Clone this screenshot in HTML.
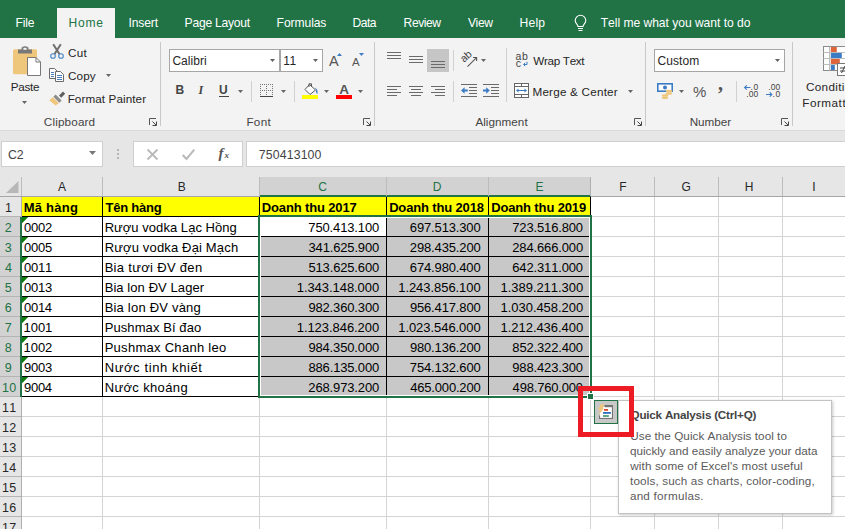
<!DOCTYPE html><html><head><meta charset="utf-8"><title>Excel</title><style>
*{box-sizing:border-box;margin:0;padding:0}
html,body{width:845px;height:529px;overflow:hidden;background:#fff}
body{position:relative;font-family:"Liberation Sans",sans-serif;font-size:12px;color:#262626;font-kerning:none}
.a{position:absolute;white-space:nowrap}
svg{overflow:visible}
</style></head><body>
<div class="a" style="left:0px;top:0px;width:845px;height:38px;background:#217346;"></div>
<div class="a" style="left:57px;top:8px;width:58px;height:30px;background:#f3f3f3;"></div>
<div class="a" style="left:15.41px;top:15.00px;font-size:12.1px;line-height:16px;letter-spacing:-0.122px;color:#fff;">File</div>
<div class="a" style="left:68.61px;top:15.00px;font-size:12.1px;line-height:16px;letter-spacing:0.685px;color:#217346;">Home</div>
<div class="a" style="left:128.48px;top:15.00px;font-size:12.1px;line-height:16px;letter-spacing:-0.131px;color:#fff;">Insert</div>
<div class="a" style="left:184.61px;top:15.00px;font-size:12.1px;line-height:16px;letter-spacing:-0.247px;color:#fff;">Page Layout</div>
<div class="a" style="left:276.61px;top:15.00px;font-size:12.1px;line-height:16px;letter-spacing:-0.085px;color:#fff;">Formulas</div>
<div class="a" style="left:352.61px;top:15.00px;font-size:12.1px;line-height:16px;letter-spacing:-0.522px;color:#fff;">Data</div>
<div class="a" style="left:403.61px;top:15.00px;font-size:12.1px;line-height:16px;letter-spacing:-0.462px;color:#fff;">Review</div>
<div class="a" style="left:467.95px;top:15.00px;font-size:12.1px;line-height:16px;letter-spacing:-0.401px;color:#fff;">View</div>
<div class="a" style="left:519.61px;top:15.00px;font-size:12.1px;line-height:16px;letter-spacing:0.205px;color:#fff;">Help</div>
<div class="a" style="left:600.73px;top:15.00px;font-size:12.1px;line-height:16px;letter-spacing:-0.034px;color:#fff;">Tell me what you want to do</div>
<svg class="a" style="left:574px;top:15px" width="13" height="17" viewBox="0 0 13 17"><path d="M4 11.5C4 9.5 1.2 8.6 1.2 5.6A5.3 5.3 0 0 1 11.8 5.6C11.8 8.6 9 9.5 9 11.5Z" fill="none" stroke="#fff" stroke-width="1.1"/><path d="M4 13.5H9M4.5 15.5H8.5" stroke="#fff" stroke-width="1.1"/></svg>
<div class="a" style="left:0px;top:38px;width:845px;height:92px;background:#f3f3f3;"></div>
<div class="a" style="left:0px;top:130px;width:845px;height:1px;background:#d8d8d8;"></div>
<div class="a" style="left:0px;top:131px;width:845px;height:46px;background:#e6e6e6;"></div>
<div class="a" style="left:160px;top:42px;width:1px;height:84px;background:#c8c8c8;"></div>
<div class="a" style="left:374px;top:42px;width:1px;height:84px;background:#c8c8c8;"></div>
<div class="a" style="left:645px;top:42px;width:1px;height:84px;background:#c8c8c8;"></div>
<div class="a" style="left:792px;top:42px;width:1px;height:84px;background:#c8c8c8;"></div>
<div class="a" style="left:43.81px;top:114.00px;font-size:11.7px;line-height:15px;letter-spacing:0.159px;color:#444;">Clipboard</div>
<div class="a" style="left:246.44px;top:114.00px;font-size:11.7px;line-height:15px;letter-spacing:0.278px;color:#444;">Font</div>
<div class="a" style="left:475.38px;top:114.00px;font-size:11.7px;line-height:15px;letter-spacing:0.035px;color:#444;">Alignment</div>
<div class="a" style="left:689.64px;top:114.00px;font-size:11.7px;line-height:15px;letter-spacing:-0.012px;color:#444;">Number</div>
<svg class="a" style="left:149px;top:118px" width="8" height="8" viewBox="0 0 8 8"><path d="M0.5 7V0.5H7" fill="none" stroke="#555" stroke-width="1"/><path d="M3.5 3.5L7 7M7.5 3.5V7.5H3.5" fill="none" stroke="#444" stroke-width="1"/></svg>
<svg class="a" style="left:363px;top:118px" width="8" height="8" viewBox="0 0 8 8"><path d="M0.5 7V0.5H7" fill="none" stroke="#555" stroke-width="1"/><path d="M3.5 3.5L7 7M7.5 3.5V7.5H3.5" fill="none" stroke="#444" stroke-width="1"/></svg>
<svg class="a" style="left:634px;top:118px" width="8" height="8" viewBox="0 0 8 8"><path d="M0.5 7V0.5H7" fill="none" stroke="#555" stroke-width="1"/><path d="M3.5 3.5L7 7M7.5 3.5V7.5H3.5" fill="none" stroke="#444" stroke-width="1"/></svg>
<svg class="a" style="left:781px;top:118px" width="8" height="8" viewBox="0 0 8 8"><path d="M0.5 7V0.5H7" fill="none" stroke="#555" stroke-width="1"/><path d="M3.5 3.5L7 7M7.5 3.5V7.5H3.5" fill="none" stroke="#444" stroke-width="1"/></svg>
<div class="a" style="left:10.64px;top:79.00px;font-size:11.7px;line-height:15px;letter-spacing:-0.260px;color:#262626;">Paste</div>
<div class="a" style="left:68.01px;top:45.00px;font-size:11.7px;line-height:15px;letter-spacing:0.236px;color:#262626;">Cut</div>
<div class="a" style="left:68.01px;top:68.00px;font-size:11.7px;line-height:15px;letter-spacing:0.101px;color:#262626;">Copy</div>
<div class="a" style="left:67.64px;top:91.00px;font-size:11.7px;line-height:15px;letter-spacing:0.091px;color:#262626;">Format Painter</div>
<div class="a" style="left:533.35px;top:53.00px;font-size:11.7px;line-height:15px;letter-spacing:-0.328px;color:#262626;">Wrap Text</div>
<div class="a" style="left:532.44px;top:84.00px;font-size:11.7px;line-height:15px;letter-spacing:0.213px;color:#262626;">Merge &amp; Center</div>
<div class="a" style="left:806.01px;top:79.00px;font-size:11.7px;line-height:15px;letter-spacing:0.327px;color:#262626;">Conditional</div>
<div class="a" style="left:802.24px;top:95.00px;font-size:11.7px;line-height:15px;letter-spacing:0.524px;color:#262626;">Formatting</div>
<svg class="a" style="left:22px;top:101px" width="5" height="3" viewBox="0 0 5 3"><path d="M0 0H5L2.5 3Z" fill="#666"/></svg>
<svg class="a" style="left:106px;top:74px" width="5" height="3" viewBox="0 0 5 3"><path d="M0 0H5L2.5 3Z" fill="#666"/></svg>
<svg class="a" style="left:628px;top:90px" width="5" height="3" viewBox="0 0 5 3"><path d="M0 0H5L2.5 3Z" fill="#666"/></svg>
<svg class="a" style="left:13px;top:46px" width="28" height="30" viewBox="0 0 28 30"><rect x="0" y="3.2" width="24" height="25" rx="1.5" fill="#eec67c"/><path d="M5 7.4V3.6H8.6V1.6Q12 -0.9 15.4 1.6V3.6H19V7.4Z" fill="#787878"/><rect x="10.4" y="1.8" width="3.2" height="2" fill="#f3f3f3"/><path d="M14.5 11.5H23L27.5 16V29.5H14.5Z" fill="#fff" stroke="#787878" stroke-width="1"/><path d="M23 11.5V16H27.5" fill="none" stroke="#787878" stroke-width="1"/></svg>
<svg class="a" style="left:50px;top:44px" width="14" height="15" viewBox="0 0 14 15"><path d="M3.2 0.3L9.6 10.3M10.8 0.3L4.4 10.3" stroke="#6e6e6e" stroke-width="2" fill="none"/><circle cx="3" cy="12" r="2.3" fill="#f3f3f3" stroke="#4a86c8" stroke-width="1.1"/><circle cx="11" cy="12" r="2.3" fill="#f3f3f3" stroke="#4a86c8" stroke-width="1.1"/></svg>
<svg class="a" style="left:49px;top:68px" width="15" height="14" viewBox="0 0 15 14"><path d="M0.5 0.5H5.5L8.5 3.5V10.5H0.5Z" fill="#fff" stroke="#6a6a6a"/><path d="M2 4.5H5M2 6.5H5M2 8.5H5" stroke="#4a7ebb"/><path d="M6.5 3.5H11.5L14.5 6.5V13.5H6.5Z" fill="#fff" stroke="#6a6a6a"/><path d="M8 7.5H13M8 9.5H13M8 11.5H13" stroke="#4a7ebb"/></svg>
<svg class="a" style="left:49px;top:91px" width="16" height="14" viewBox="0 0 16 14"><path d="M10 4.6L14 0.6L16.2 2.8L12.2 6.8Z" fill="#606060"/><path d="M6.6 3.6L12.6 9.6L10.4 11.8L4.4 5.8Z" fill="#8c8c8c"/><path d="M3.8 6.2L9.8 12.2L6.6 14.6L0.2 9.2Z" fill="#eec67c"/></svg>
<div class="a" style="left:169px;top:49px;width:111px;height:23px;background:#fff;border:1px solid #a6a6a6"></div>
<div class="a" style="left:172.39px;top:53.00px;font-size:12px;line-height:16px;letter-spacing:0.068px;color:#262626;">Calibri</div>
<svg class="a" style="left:270px;top:59px" width="5" height="3" viewBox="0 0 5 3"><path d="M0 0H5L2.5 3Z" fill="#606060"/></svg>
<div class="a" style="left:280px;top:49px;width:43px;height:23px;background:#fff;border:1px solid #a6a6a6"></div>
<div class="a" style="left:283.25px;top:53.00px;font-size:12px;line-height:16px;letter-spacing:-0.398px;color:#262626;">11</div>
<svg class="a" style="left:313px;top:59px" width="5" height="3" viewBox="0 0 5 3"><path d="M0 0H5L2.5 3Z" fill="#606060"/></svg>
<div class="a" style="left:654px;top:49px;width:131px;height:23px;background:#fff;border:1px solid #a6a6a6"></div>
<div class="a" style="left:657.39px;top:53.00px;font-size:12px;line-height:16px;letter-spacing:0.091px;color:#262626;">Custom</div>
<svg class="a" style="left:775px;top:59px" width="5" height="3" viewBox="0 0 5 3"><path d="M0 0H5L2.5 3Z" fill="#606060"/></svg>
<div class="a" style="left:328.97px;top:52.00px;font-size:14.5px;line-height:18px;letter-spacing:0.000px;color:#555;">A</div>
<div class="a" style="left:351.98px;top:55.00px;font-size:11.5px;line-height:14px;letter-spacing:0.000px;color:#555;">A</div>
<svg class="a" style="left:337px;top:53px" width="5" height="3" viewBox="0 0 5 3"><path d="M0 3H5L2.5 0Z" fill="#3b7cc4"/></svg>
<svg class="a" style="left:359px;top:53px" width="5" height="3" viewBox="0 0 5 3"><path d="M0 0H5L2.5 3Z" fill="#3b7cc4"/></svg>
<div class="a" style="left:175.40px;top:82.00px;font-size:12px;line-height:16px;letter-spacing:0.000px;color:#444;font-weight:bold;">B</div>
<div class="a" style="left:198.62px;top:82.00px;font-size:12px;line-height:16px;letter-spacing:0.000px;color:#444;font-weight:bold;font-style:italic;font-family:'Liberation Serif',serif;">I</div>
<div class="a" style="left:218.88px;top:82.00px;font-size:12px;line-height:16px;letter-spacing:0.000px;color:#444;font-weight:bold;">U</div>
<div class="a" style="left:219px;top:96px;width:10px;height:1px;background:#444;"></div>
<svg class="a" style="left:238px;top:90px" width="5" height="3" viewBox="0 0 5 3"><path d="M0 0H5L2.5 3Z" fill="#666"/></svg>
<div class="a" style="left:251px;top:81px;width:1px;height:21px;background:#d0d0d0;"></div>
<div class="a" style="left:294px;top:81px;width:1px;height:21px;background:#d0d0d0;"></div>
<svg class="a" style="left:260px;top:84px" width="13" height="13" viewBox="0 0 13 13"><rect x="0" y="0" width="1" height="1" fill="#777"/><rect x="2" y="0" width="1" height="1" fill="#777"/><rect x="4" y="0" width="1" height="1" fill="#777"/><rect x="6" y="0" width="1" height="1" fill="#777"/><rect x="8" y="0" width="1" height="1" fill="#777"/><rect x="10" y="0" width="1" height="1" fill="#777"/><rect x="12" y="0" width="1" height="1" fill="#777"/><rect x="0" y="2" width="1" height="1" fill="#777"/><rect x="6" y="2" width="1" height="1" fill="#777"/><rect x="12" y="2" width="1" height="1" fill="#777"/><rect x="0" y="4" width="1" height="1" fill="#777"/><rect x="6" y="4" width="1" height="1" fill="#777"/><rect x="12" y="4" width="1" height="1" fill="#777"/><rect x="0" y="6" width="1" height="1" fill="#777"/><rect x="2" y="6" width="1" height="1" fill="#777"/><rect x="4" y="6" width="1" height="1" fill="#777"/><rect x="6" y="6" width="1" height="1" fill="#777"/><rect x="8" y="6" width="1" height="1" fill="#777"/><rect x="10" y="6" width="1" height="1" fill="#777"/><rect x="12" y="6" width="1" height="1" fill="#777"/><rect x="0" y="8" width="1" height="1" fill="#777"/><rect x="6" y="8" width="1" height="1" fill="#777"/><rect x="12" y="8" width="1" height="1" fill="#777"/><rect x="0" y="10" width="1" height="1" fill="#777"/><rect x="6" y="10" width="1" height="1" fill="#777"/><rect x="12" y="10" width="1" height="1" fill="#777"/><rect x="0" y="12" width="13" height="1" fill="#444"/></svg>
<svg class="a" style="left:281px;top:90px" width="5" height="3" viewBox="0 0 5 3"><path d="M0 0H5L2.5 3Z" fill="#666"/></svg>
<svg class="a" style="left:302px;top:83px" width="17" height="16" viewBox="0 0 17 16"><rect x="0" y="12" width="16" height="4" fill="#ffff00"/><path d="M7.5 1.5L13.5 7L8 11.5L3 6.5Z" fill="#fff" stroke="#555" stroke-width="1"/><path d="M7 4V0.8H9.5V3.5" fill="none" stroke="#555" stroke-width="1"/><path d="M12.6 4.6Q16.8 7 15.2 11.2Q13.2 9.6 14.2 7.2Q13.6 5.8 12.6 4.6Z" fill="#3b7cc4"/></svg>
<svg class="a" style="left:324px;top:90px" width="5" height="3" viewBox="0 0 5 3"><path d="M0 0H5L2.5 3Z" fill="#666"/></svg>
<div class="a" style="left:339.36px;top:81.00px;font-size:13.5px;line-height:17px;letter-spacing:0.000px;color:#555;font-weight:bold;">A</div>
<div class="a" style="left:336px;top:95px;width:16px;height:4px;background:#ff0000;"></div>
<svg class="a" style="left:358px;top:90px" width="5" height="3" viewBox="0 0 5 3"><path d="M0 0H5L2.5 3Z" fill="#666"/></svg>
<div class="a" style="left:427px;top:49px;width:22px;height:23px;background:#c6c6c6;"></div>
<svg class="a" style="left:387px;top:52px" width="14" height="9" viewBox="0 0 14 9"><rect x="0" y="0" width="14" height="1" fill="#6a6a6a"/><rect x="0" y="3" width="14" height="1" fill="#6a6a6a"/><rect x="0" y="6" width="14" height="1" fill="#6a6a6a"/></svg>
<svg class="a" style="left:409px;top:56px" width="14" height="9" viewBox="0 0 14 9"><rect x="0" y="0" width="14" height="1" fill="#6a6a6a"/><rect x="0" y="3" width="14" height="1" fill="#6a6a6a"/><rect x="0" y="6" width="14" height="1" fill="#6a6a6a"/></svg>
<svg class="a" style="left:431px;top:61px" width="14" height="9" viewBox="0 0 14 9"><rect x="0" y="0" width="14" height="1" fill="#6a6a6a"/><rect x="0" y="3" width="14" height="1" fill="#6a6a6a"/><rect x="0" y="6" width="14" height="1" fill="#6a6a6a"/></svg>
<svg class="a" style="left:387px;top:86px" width="14" height="12" viewBox="0 0 14 12"><rect x="0" y="0" width="14" height="1" fill="#6a6a6a"/><rect x="0" y="3" width="10" height="1" fill="#6a6a6a"/><rect x="0" y="6" width="14" height="1" fill="#6a6a6a"/><rect x="0" y="9" width="10" height="1" fill="#6a6a6a"/></svg>
<svg class="a" style="left:409px;top:86px" width="14" height="12" viewBox="0 0 14 12"><rect x="0" y="0" width="14" height="1" fill="#6a6a6a"/><rect x="2" y="3" width="10" height="1" fill="#6a6a6a"/><rect x="0" y="6" width="14" height="1" fill="#6a6a6a"/><rect x="2" y="9" width="10" height="1" fill="#6a6a6a"/></svg>
<svg class="a" style="left:431px;top:86px" width="14" height="12" viewBox="0 0 14 12"><rect x="0" y="0" width="14" height="1" fill="#6a6a6a"/><rect x="4" y="3" width="10" height="1" fill="#6a6a6a"/><rect x="0" y="6" width="14" height="1" fill="#6a6a6a"/><rect x="4" y="9" width="10" height="1" fill="#6a6a6a"/></svg>
<div class="a" style="left:453px;top:50px;width:1px;height:21px;background:#d0d0d0;"></div>
<div class="a" style="left:453px;top:81px;width:1px;height:21px;background:#d0d0d0;"></div>
<div class="a" style="left:506px;top:48px;width:1px;height:54px;background:#d0d0d0;"></div>
<div class="a" style="left:459.6px;top:50.2px;font-size:10.5px;line-height:12px;color:#444;transform:rotate(-42deg);transform-origin:50% 50%;letter-spacing:-0.3px">ab</div>
<svg class="a" style="left:461px;top:53px" width="16" height="14" viewBox="0 0 16 14"><path d="M6.5 13.6L15 5.1" stroke="#555" stroke-width="1.1" fill="none"/><path d="M12 4.5H15.6V8.1" stroke="#555" stroke-width="1.1" fill="none"/></svg>
<svg class="a" style="left:481px;top:59px" width="5" height="3" viewBox="0 0 5 3"><path d="M0 0H5L2.5 3Z" fill="#666"/></svg>
<svg class="a" style="left:461px;top:84px" width="16" height="13" viewBox="0 0 16 13"><rect x="0" y="0" width="16" height="1" fill="#6a6a6a"/><rect x="8" y="3" width="8" height="1" fill="#6a6a6a"/><rect x="8" y="6" width="8" height="1" fill="#6a6a6a"/><rect x="8" y="9" width="8" height="1" fill="#6a6a6a"/><rect x="0" y="12" width="16" height="1" fill="#6a6a6a"/><path d="M0 6.5L3.6 3.2V5.4H6.8V7.6H3.6V9.8Z" fill="#3b7cc4"/></svg>
<svg class="a" style="left:483px;top:84px" width="16" height="13" viewBox="0 0 16 13"><rect x="0" y="0" width="16" height="1" fill="#6a6a6a"/><rect x="8" y="3" width="8" height="1" fill="#6a6a6a"/><rect x="8" y="6" width="8" height="1" fill="#6a6a6a"/><rect x="8" y="9" width="8" height="1" fill="#6a6a6a"/><rect x="0" y="12" width="16" height="1" fill="#6a6a6a"/><path d="M6.8 6.5L3.2 3.2V5.4H0V7.6H3.2V9.8Z" fill="#3b7cc4"/></svg>
<div class="a" style="left:515.55px;top:49.00px;font-size:10.5px;line-height:14px;letter-spacing:0.608px;color:#444;">ab</div>
<div class="a" style="left:515.85px;top:56.00px;font-size:10.5px;line-height:14px;letter-spacing:0.000px;color:#444;">c</div>
<svg class="a" style="left:522px;top:61px" width="7" height="6" viewBox="0 0 7 6"><path d="M5 0.8V3.5H1.8M3.2 1.8L1.5 3.5L3.2 5.2" stroke="#3b7cc4" stroke-width="1" fill="none"/></svg>
<svg class="a" style="left:514px;top:83px" width="15" height="15" viewBox="0 0 15 15"><rect x="0.5" y="0.5" width="14" height="14" fill="#fff" stroke="#666"/><path d="M0.5 3.5H14.5M0.5 11.5H14.5M7.5 0.5V3.5M7.5 11.5V14.5" stroke="#666" fill="none"/><path d="M3 7.5H12" stroke="#3b7cc4" fill="none"/><path d="M2 7.5L4.5 5.5V9.5ZM13 7.5L10.5 5.5V9.5Z" fill="#3b7cc4"/></svg>
<svg class="a" style="left:657px;top:83px" width="16" height="16" viewBox="0 0 16 16"><rect x="0.8" y="0.8" width="14.4" height="7.4" fill="#fff" stroke="#3b7cc4" stroke-width="1.6"/><circle cx="8" cy="4.5" r="2" fill="#3b7cc4"/><ellipse cx="12" cy="8" rx="3.3" ry="1.3" fill="#eec67c"/><ellipse cx="12" cy="10.5" rx="3.3" ry="1.3" fill="#eec67c"/><ellipse cx="8" cy="12.5" rx="3.3" ry="1.3" fill="#eec67c"/><ellipse cx="8" cy="14.7" rx="3.3" ry="1.3" fill="#eec67c"/></svg>
<svg class="a" style="left:679px;top:90px" width="5" height="3" viewBox="0 0 5 3"><path d="M0 0H5L2.5 3Z" fill="#666"/></svg>
<div class="a" style="left:692.97px;top:82.00px;font-size:15px;line-height:19px;letter-spacing:0.000px;color:#555;">%</div>
<div class="a" style="left:718.04px;top:71.00px;font-size:20px;line-height:24px;letter-spacing:0.000px;color:#555;font-weight:bold;font-family:'Liberation Serif',serif;">,</div>
<div class="a" style="left:736px;top:81px;width:1px;height:21px;background:#d0d0d0;"></div>
<div class="a" style="left:750.62px;top:81.00px;font-size:8.5px;line-height:12px;letter-spacing:0.619px;color:#444;">.0</div>
<div class="a" style="left:746.22px;top:88.00px;font-size:8.5px;line-height:12px;letter-spacing:0.146px;color:#444;">.00</div>
<svg class="a" style="left:744px;top:85px" width="7" height="5" viewBox="0 0 7 5"><path d="M0.5 2.5H6.5M2.8 0.3L0.6 2.5L2.8 4.7" stroke="#3b7cc4" stroke-width="1.1" fill="none"/></svg>
<div class="a" style="left:768.22px;top:81.00px;font-size:8.5px;line-height:12px;letter-spacing:0.146px;color:#444;">.00</div>
<div class="a" style="left:772.62px;top:88.00px;font-size:8.5px;line-height:12px;letter-spacing:0.619px;color:#444;">.0</div>
<svg class="a" style="left:766px;top:92px" width="7" height="5" viewBox="0 0 7 5"><path d="M0 2.5H6M3.7 0.3L5.9 2.5L3.7 4.7" stroke="#3b7cc4" stroke-width="1.1" fill="none"/></svg>
<svg class="a" style="left:823px;top:46px" width="22" height="30" viewBox="0 0 22 30"><rect x="0.5" y="0.5" width="24" height="24" fill="#fff" stroke="#8a8a8a"/><path d="M0.5 6.5H24M0.5 12.5H24M0.5 18.5H24M6.5 0.5V24.5" stroke="#bdbdbd" fill="none"/><rect x="7.8" y="1" width="6" height="5" fill="#e0643c"/><rect x="7.8" y="7" width="11" height="5" fill="#3b7cc4"/><rect x="7.8" y="13" width="9" height="5" fill="#e0643c"/><rect x="7.8" y="19" width="4" height="5" fill="#3b7cc4"/><rect x="14.5" y="17.5" width="10" height="12" fill="#fff" stroke="#777"/><path d="M17 22H23M17 25H23M22 20L18.5 27" stroke="#444" fill="none"/></svg>
<div class="a" style="left:1px;top:141px;width:102px;height:26px;background:#fff;border:1px solid #cfcfcf"></div>
<div class="a" style="left:133px;top:141px;width:110px;height:26px;background:#fff;border:1px solid #cfcfcf"></div>
<div class="a" style="left:246px;top:141px;width:605px;height:26px;background:#fff;border:1px solid #cfcfcf"></div>
<div class="a" style="left:7.98px;top:147.00px;font-size:12.3px;line-height:16px;letter-spacing:-0.080px;color:#444;">C2</div>
<div class="a" style="left:258.67px;top:147.00px;font-size:12.3px;line-height:16px;letter-spacing:0.156px;color:#444;">750413100</div>
<svg class="a" style="left:89px;top:151px" width="7" height="4" viewBox="0 0 7 4"><path d="M0 0H7L3.5 4Z" fill="#777"/></svg>
<div class="a" style="left:117px;top:149px;width:2px;height:2px;background:#b4b4b4;"></div>
<div class="a" style="left:117px;top:153px;width:2px;height:2px;background:#b4b4b4;"></div>
<div class="a" style="left:117px;top:157px;width:2px;height:2px;background:#b4b4b4;"></div>
<svg class="a" style="left:147px;top:149px" width="11" height="11" viewBox="0 0 11 11"><path d="M0.5 0.5L10.5 10.5M10.5 0.5L0.5 10.5" stroke="#b9b9b9" stroke-width="1.8" fill="none"/></svg>
<svg class="a" style="left:182px;top:149px" width="13" height="11" viewBox="0 0 13 11"><path d="M0.7 6L4.5 10L12.3 0.7" stroke="#b9b9b9" stroke-width="2" fill="none"/></svg>
<div class="a" style="left:218.50px;top:144.00px;font-size:15px;line-height:18px;letter-spacing:0.000px;color:#555;font-weight:bold;font-style:italic;font-family:'Liberation Serif',serif;">f</div>
<div class="a" style="left:224.41px;top:149.00px;font-size:9px;line-height:12px;letter-spacing:0.000px;color:#555;font-weight:bold;font-style:italic;font-family:'Liberation Serif',serif;">x</div>
<div class="a" style="left:0px;top:177px;width:845px;height:20px;background:#e6e6e6;"></div>
<div class="a" style="left:260px;top:177px;width:331px;height:20px;background:#d2d2d2;"></div>
<div class="a" style="left:0px;top:196px;width:845px;height:1px;background:#a6a6a6;"></div>
<div class="a" style="left:260px;top:195px;width:331px;height:2px;background:#217346;"></div>
<svg class="a" style="left:6px;top:181px" width="13" height="12" viewBox="0 0 13 12"><path d="M12.5 0V12H0Z" fill="#b7b7b7"/></svg>
<div class="a" style="left:21px;top:177px;width:1px;height:19px;background:#bcbcbc;"></div>
<div class="a" style="left:57.98px;top:179.00px;font-size:12px;line-height:16px;letter-spacing:0.000px;color:#262626;">A</div>
<div class="a" style="left:102px;top:177px;width:1px;height:19px;background:#bcbcbc;"></div>
<div class="a" style="left:177.82px;top:179.00px;font-size:12px;line-height:16px;letter-spacing:0.000px;color:#262626;">B</div>
<div class="a" style="left:259px;top:177px;width:1px;height:19px;background:#bcbcbc;"></div>
<div class="a" style="left:318.19px;top:179.00px;font-size:12px;line-height:16px;letter-spacing:0.000px;color:#217346;">C</div>
<div class="a" style="left:386px;top:177px;width:1px;height:19px;background:#bcbcbc;"></div>
<div class="a" style="left:432.72px;top:179.00px;font-size:12px;line-height:16px;letter-spacing:0.000px;color:#217346;">D</div>
<div class="a" style="left:488px;top:177px;width:1px;height:19px;background:#bcbcbc;"></div>
<div class="a" style="left:535.42px;top:179.00px;font-size:12px;line-height:16px;letter-spacing:0.000px;color:#217346;">E</div>
<div class="a" style="left:590px;top:177px;width:1px;height:19px;background:#bcbcbc;"></div>
<div class="a" style="left:619.32px;top:179.00px;font-size:12px;line-height:16px;letter-spacing:0.000px;color:#262626;">F</div>
<div class="a" style="left:654px;top:177px;width:1px;height:19px;background:#bcbcbc;"></div>
<div class="a" style="left:681.40px;top:179.00px;font-size:12px;line-height:16px;letter-spacing:0.000px;color:#262626;">G</div>
<div class="a" style="left:718px;top:177px;width:1px;height:19px;background:#bcbcbc;"></div>
<div class="a" style="left:744.82px;top:179.00px;font-size:12px;line-height:16px;letter-spacing:0.000px;color:#262626;">H</div>
<div class="a" style="left:782px;top:177px;width:1px;height:19px;background:#bcbcbc;"></div>
<div class="a" style="left:812.19px;top:179.00px;font-size:12px;line-height:16px;letter-spacing:0.000px;color:#262626;">I</div>
<div class="a" style="left:590px;top:177px;width:1px;height:19px;background:#b0b0b0;"></div>
<div class="a" style="left:0px;top:197px;width:21px;height:332px;background:#e6e6e6;"></div>
<div class="a" style="left:0px;top:217px;width:21px;height:180px;background:#d2d2d2;"></div>
<div class="a" style="left:21px;top:197px;width:1px;height:332px;background:#b0b0b0;"></div>
<div class="a" style="left:20px;top:217px;width:2px;height:180px;background:#217346;"></div>
<div class="a" style="left:5.10px;top:200.00px;font-size:12.5px;line-height:16px;letter-spacing:0.000px;color:#262626;">1</div>
<div class="a" style="left:0px;top:216px;width:21px;height:1px;background:#b4b4b4;"></div>
<div class="a" style="left:4.67px;top:220.00px;font-size:12.5px;line-height:16px;letter-spacing:0.000px;color:#217346;">2</div>
<div class="a" style="left:0px;top:236px;width:20px;height:1px;background:#b4b4b4;"></div>
<div class="a" style="left:4.82px;top:240.00px;font-size:12.5px;line-height:16px;letter-spacing:0.000px;color:#217346;">3</div>
<div class="a" style="left:0px;top:256px;width:20px;height:1px;background:#b4b4b4;"></div>
<div class="a" style="left:5.01px;top:260.00px;font-size:12.5px;line-height:16px;letter-spacing:0.000px;color:#217346;">4</div>
<div class="a" style="left:0px;top:276px;width:20px;height:1px;background:#b4b4b4;"></div>
<div class="a" style="left:4.80px;top:280.00px;font-size:12.5px;line-height:16px;letter-spacing:0.000px;color:#217346;">5</div>
<div class="a" style="left:0px;top:296px;width:20px;height:1px;background:#b4b4b4;"></div>
<div class="a" style="left:4.67px;top:300.00px;font-size:12.5px;line-height:16px;letter-spacing:0.000px;color:#217346;">6</div>
<div class="a" style="left:0px;top:316px;width:20px;height:1px;background:#b4b4b4;"></div>
<div class="a" style="left:4.66px;top:320.00px;font-size:12.5px;line-height:16px;letter-spacing:0.000px;color:#217346;">7</div>
<div class="a" style="left:0px;top:336px;width:20px;height:1px;background:#b4b4b4;"></div>
<div class="a" style="left:4.76px;top:340.00px;font-size:12.5px;line-height:16px;letter-spacing:0.000px;color:#217346;">8</div>
<div class="a" style="left:0px;top:356px;width:20px;height:1px;background:#b4b4b4;"></div>
<div class="a" style="left:4.71px;top:360.00px;font-size:12.5px;line-height:16px;letter-spacing:0.000px;color:#217346;">9</div>
<div class="a" style="left:0px;top:376px;width:20px;height:1px;background:#b4b4b4;"></div>
<div class="a" style="left:1.90px;top:380.00px;font-size:12.5px;line-height:16px;letter-spacing:0.410px;color:#217346;">10</div>
<div class="a" style="left:0px;top:396px;width:20px;height:1px;background:#b4b4b4;"></div>
<div class="a" style="left:1.90px;top:400.00px;font-size:12.5px;line-height:16px;letter-spacing:0.410px;color:#262626;">11</div>
<div class="a" style="left:0px;top:416px;width:21px;height:1px;background:#b4b4b4;"></div>
<div class="a" style="left:1.90px;top:420.00px;font-size:12.5px;line-height:16px;letter-spacing:0.410px;color:#262626;">12</div>
<div class="a" style="left:0px;top:436px;width:21px;height:1px;background:#b4b4b4;"></div>
<div class="a" style="left:1.90px;top:440.00px;font-size:12.5px;line-height:16px;letter-spacing:0.410px;color:#262626;">13</div>
<div class="a" style="left:0px;top:456px;width:21px;height:1px;background:#b4b4b4;"></div>
<div class="a" style="left:1.90px;top:460.00px;font-size:12.5px;line-height:16px;letter-spacing:0.410px;color:#262626;">14</div>
<div class="a" style="left:0px;top:476px;width:21px;height:1px;background:#b4b4b4;"></div>
<div class="a" style="left:1.90px;top:480.00px;font-size:12.5px;line-height:16px;letter-spacing:0.410px;color:#262626;">15</div>
<div class="a" style="left:0px;top:496px;width:21px;height:1px;background:#b4b4b4;"></div>
<div class="a" style="left:1.90px;top:500.00px;font-size:12.5px;line-height:16px;letter-spacing:0.410px;color:#262626;">16</div>
<div class="a" style="left:0px;top:516px;width:21px;height:1px;background:#b4b4b4;"></div>
<div class="a" style="left:1.90px;top:520.00px;font-size:12.5px;line-height:16px;letter-spacing:0.410px;color:#262626;">17</div>
<div class="a" style="left:0px;top:536px;width:21px;height:1px;background:#b4b4b4;"></div>
<div class="a" style="left:102px;top:197px;width:1px;height:332px;background:#d4d4d4;"></div>
<div class="a" style="left:259px;top:197px;width:1px;height:332px;background:#d4d4d4;"></div>
<div class="a" style="left:386px;top:197px;width:1px;height:332px;background:#d4d4d4;"></div>
<div class="a" style="left:488px;top:197px;width:1px;height:332px;background:#d4d4d4;"></div>
<div class="a" style="left:590px;top:197px;width:1px;height:332px;background:#d4d4d4;"></div>
<div class="a" style="left:654px;top:197px;width:1px;height:332px;background:#d4d4d4;"></div>
<div class="a" style="left:718px;top:197px;width:1px;height:332px;background:#d4d4d4;"></div>
<div class="a" style="left:782px;top:197px;width:1px;height:332px;background:#d4d4d4;"></div>
<div class="a" style="left:846px;top:197px;width:1px;height:332px;background:#d4d4d4;"></div>
<div class="a" style="left:22px;top:216px;width:823px;height:1px;background:#d4d4d4;"></div>
<div class="a" style="left:22px;top:236px;width:823px;height:1px;background:#d4d4d4;"></div>
<div class="a" style="left:22px;top:256px;width:823px;height:1px;background:#d4d4d4;"></div>
<div class="a" style="left:22px;top:276px;width:823px;height:1px;background:#d4d4d4;"></div>
<div class="a" style="left:22px;top:296px;width:823px;height:1px;background:#d4d4d4;"></div>
<div class="a" style="left:22px;top:316px;width:823px;height:1px;background:#d4d4d4;"></div>
<div class="a" style="left:22px;top:336px;width:823px;height:1px;background:#d4d4d4;"></div>
<div class="a" style="left:22px;top:356px;width:823px;height:1px;background:#d4d4d4;"></div>
<div class="a" style="left:22px;top:376px;width:823px;height:1px;background:#d4d4d4;"></div>
<div class="a" style="left:22px;top:396px;width:823px;height:1px;background:#d4d4d4;"></div>
<div class="a" style="left:22px;top:416px;width:823px;height:1px;background:#d4d4d4;"></div>
<div class="a" style="left:22px;top:436px;width:823px;height:1px;background:#d4d4d4;"></div>
<div class="a" style="left:22px;top:456px;width:823px;height:1px;background:#d4d4d4;"></div>
<div class="a" style="left:22px;top:476px;width:823px;height:1px;background:#d4d4d4;"></div>
<div class="a" style="left:22px;top:496px;width:823px;height:1px;background:#d4d4d4;"></div>
<div class="a" style="left:22px;top:516px;width:823px;height:1px;background:#d4d4d4;"></div>
<div class="a" style="left:22px;top:536px;width:823px;height:1px;background:#d4d4d4;"></div>
<div class="a" style="left:22px;top:197px;width:569px;height:19px;background:#ffff00;"></div>
<div class="a" style="left:260px;top:217px;width:330px;height:180px;background:#c8c8c8;"></div>
<div class="a" style="left:260px;top:217px;width:126px;height:20px;background:#fff;"></div>
<div class="a" style="left:22px;top:216px;width:569px;height:1px;background:#000;"></div>
<div class="a" style="left:22px;top:236px;width:569px;height:1px;background:#000;"></div>
<div class="a" style="left:22px;top:256px;width:569px;height:1px;background:#000;"></div>
<div class="a" style="left:22px;top:276px;width:569px;height:1px;background:#000;"></div>
<div class="a" style="left:22px;top:296px;width:569px;height:1px;background:#000;"></div>
<div class="a" style="left:22px;top:316px;width:569px;height:1px;background:#000;"></div>
<div class="a" style="left:22px;top:336px;width:569px;height:1px;background:#000;"></div>
<div class="a" style="left:22px;top:356px;width:569px;height:1px;background:#000;"></div>
<div class="a" style="left:22px;top:376px;width:569px;height:1px;background:#000;"></div>
<div class="a" style="left:22px;top:396px;width:569px;height:1px;background:#000;"></div>
<div class="a" style="left:102px;top:197px;width:1px;height:200px;background:#000;"></div>
<div class="a" style="left:259px;top:197px;width:1px;height:200px;background:#000;"></div>
<div class="a" style="left:386px;top:197px;width:1px;height:200px;background:#000;"></div>
<div class="a" style="left:488px;top:197px;width:1px;height:200px;background:#000;"></div>
<div class="a" style="left:590px;top:197px;width:1px;height:200px;background:#000;"></div>
<div class="a" style="left:23.63px;top:199.00px;font-size:13px;line-height:17px;letter-spacing:0.253px;color:#000;font-weight:bold;">Mã hàng</div>
<div class="a" style="left:105.55px;top:199.00px;font-size:13px;line-height:17px;letter-spacing:-0.237px;color:#000;font-weight:bold;">Tên hàng</div>
<div class="a" style="left:261.83px;top:199.00px;font-size:13px;line-height:17px;letter-spacing:-0.143px;color:#000;font-weight:bold;">Doanh thu 2017</div>
<div class="a" style="left:389.13px;top:199.00px;font-size:13px;line-height:17px;letter-spacing:-0.148px;color:#000;font-weight:bold;">Doanh thu 2018</div>
<div class="a" style="left:491.13px;top:199.00px;font-size:13px;line-height:17px;letter-spacing:-0.134px;color:#000;font-weight:bold;">Doanh thu 2019</div>
<div class="a" style="left:24.09px;top:219.00px;font-size:13px;line-height:17px;letter-spacing:-0.219px;color:#000;">0002</div>
<div class="a" style="left:104.63px;top:219.00px;font-size:13px;line-height:17px;letter-spacing:0.044px;color:#000;">Rượu vodka Lạc Hồng</div>
<div class="a" style="left:308.33px;top:219.00px;font-size:13px;line-height:17px;letter-spacing:-0.142px;color:#000;">750.413.100</div>
<div class="a" style="left:409.84px;top:219.00px;font-size:13px;line-height:17px;letter-spacing:-0.143px;color:#000;">697.513.300</div>
<div class="a" style="left:512.23px;top:219.00px;font-size:13px;line-height:17px;letter-spacing:-0.142px;color:#000;">723.516.800</div>
<div class="a" style="left:24.09px;top:239.00px;font-size:13px;line-height:17px;letter-spacing:-0.255px;color:#000;">0005</div>
<div class="a" style="left:104.63px;top:239.00px;font-size:13px;line-height:17px;letter-spacing:0.158px;color:#000;">Rượu vodka Đại Mạch</div>
<div class="a" style="left:308.50px;top:239.00px;font-size:13px;line-height:17px;letter-spacing:-0.159px;color:#000;">341.625.900</div>
<div class="a" style="left:409.85px;top:239.00px;font-size:13px;line-height:17px;letter-spacing:-0.143px;color:#000;">298.435.200</div>
<div class="a" style="left:512.25px;top:239.00px;font-size:13px;line-height:17px;letter-spacing:-0.143px;color:#000;">284.666.000</div>
<div class="a" style="left:24.09px;top:259.00px;font-size:13px;line-height:17px;letter-spacing:-0.226px;color:#000;">0011</div>
<div class="a" style="left:104.63px;top:259.00px;font-size:13px;line-height:17px;letter-spacing:0.315px;color:#000;">Bia tươi ĐV đen</div>
<div class="a" style="left:308.48px;top:259.00px;font-size:13px;line-height:17px;letter-spacing:-0.157px;color:#000;">513.625.600</div>
<div class="a" style="left:409.84px;top:259.00px;font-size:13px;line-height:17px;letter-spacing:-0.143px;color:#000;">674.980.400</div>
<div class="a" style="left:512.24px;top:259.00px;font-size:13px;line-height:17px;letter-spacing:-0.143px;color:#000;">642.311.000</div>
<div class="a" style="left:24.09px;top:279.00px;font-size:13px;line-height:17px;letter-spacing:-0.247px;color:#000;">0013</div>
<div class="a" style="left:104.63px;top:279.00px;font-size:13px;line-height:17px;letter-spacing:0.080px;color:#000;">Bia lon ĐV Lager</div>
<div class="a" style="left:296.71px;top:279.00px;font-size:13px;line-height:17px;letter-spacing:-0.053px;color:#000;">1.343.148.000</div>
<div class="a" style="left:398.21px;top:279.00px;font-size:13px;line-height:17px;letter-spacing:-0.053px;color:#000;">1.243.856.100</div>
<div class="a" style="left:500.61px;top:279.00px;font-size:13px;line-height:17px;letter-spacing:-0.053px;color:#000;">1.389.211.300</div>
<div class="a" style="left:24.09px;top:299.00px;font-size:13px;line-height:17px;letter-spacing:-0.310px;color:#000;">0014</div>
<div class="a" style="left:104.63px;top:299.00px;font-size:13px;line-height:17px;letter-spacing:0.206px;color:#000;">Bia lon ĐV vàng</div>
<div class="a" style="left:308.39px;top:299.00px;font-size:13px;line-height:17px;letter-spacing:-0.148px;color:#000;">982.360.300</div>
<div class="a" style="left:409.89px;top:299.00px;font-size:13px;line-height:17px;letter-spacing:-0.148px;color:#000;">956.417.800</div>
<div class="a" style="left:500.61px;top:299.00px;font-size:13px;line-height:17px;letter-spacing:-0.053px;color:#000;">1.030.458.200</div>
<div class="a" style="left:23.61px;top:319.00px;font-size:13px;line-height:17px;letter-spacing:-0.065px;color:#000;">1001</div>
<div class="a" style="left:104.63px;top:319.00px;font-size:13px;line-height:17px;letter-spacing:0.094px;color:#000;">Pushmax Bí đao</div>
<div class="a" style="left:296.71px;top:319.00px;font-size:13px;line-height:17px;letter-spacing:-0.053px;color:#000;">1.123.846.200</div>
<div class="a" style="left:398.21px;top:319.00px;font-size:13px;line-height:17px;letter-spacing:-0.053px;color:#000;">1.023.546.000</div>
<div class="a" style="left:500.61px;top:319.00px;font-size:13px;line-height:17px;letter-spacing:-0.053px;color:#000;">1.212.436.400</div>
<div class="a" style="left:23.61px;top:339.00px;font-size:13px;line-height:17px;letter-spacing:-0.059px;color:#000;">1002</div>
<div class="a" style="left:104.63px;top:339.00px;font-size:13px;line-height:17px;letter-spacing:0.284px;color:#000;">Pushmax Chanh leo</div>
<div class="a" style="left:308.39px;top:339.00px;font-size:13px;line-height:17px;letter-spacing:-0.148px;color:#000;">984.350.000</div>
<div class="a" style="left:409.89px;top:339.00px;font-size:13px;line-height:17px;letter-spacing:-0.148px;color:#000;">980.136.200</div>
<div class="a" style="left:512.34px;top:339.00px;font-size:13px;line-height:17px;letter-spacing:-0.152px;color:#000;">852.322.400</div>
<div class="a" style="left:23.99px;top:359.00px;font-size:13px;line-height:17px;letter-spacing:-0.213px;color:#000;">9003</div>
<div class="a" style="left:104.63px;top:359.00px;font-size:13px;line-height:17px;letter-spacing:0.614px;color:#000;">Nước tinh khiết</div>
<div class="a" style="left:308.44px;top:359.00px;font-size:13px;line-height:17px;letter-spacing:-0.152px;color:#000;">886.135.000</div>
<div class="a" style="left:409.83px;top:359.00px;font-size:13px;line-height:17px;letter-spacing:-0.142px;color:#000;">754.132.600</div>
<div class="a" style="left:512.29px;top:359.00px;font-size:13px;line-height:17px;letter-spacing:-0.148px;color:#000;">988.423.300</div>
<div class="a" style="left:23.99px;top:379.00px;font-size:13px;line-height:17px;letter-spacing:-0.277px;color:#000;">9004</div>
<div class="a" style="left:104.63px;top:379.00px;font-size:13px;line-height:17px;letter-spacing:0.363px;color:#000;">Nước khoáng</div>
<div class="a" style="left:308.35px;top:379.00px;font-size:13px;line-height:17px;letter-spacing:-0.143px;color:#000;">268.973.200</div>
<div class="a" style="left:410.20px;top:379.00px;font-size:13px;line-height:17px;letter-spacing:-0.179px;color:#000;">465.000.200</div>
<div class="a" style="left:512.60px;top:379.00px;font-size:13px;line-height:17px;letter-spacing:-0.179px;color:#000;">498.760.000</div>
<div class="a" style="left:260px;top:217px;width:330px;height:1px;background:#fff;"></div>
<div class="a" style="left:260px;top:217px;width:1px;height:179px;background:#fff;"></div>
<div class="a" style="left:589px;top:217px;width:1px;height:179px;background:#fff;"></div>
<div class="a" style="left:260px;top:395px;width:330px;height:1px;background:#fff;"></div>
<svg class="a" style="left:22px;top:217px" width="6" height="6" viewBox="0 0 6 6"><path d="M0 0H6.2L0 6.2Z" fill="#0a7d0a"/></svg>
<svg class="a" style="left:22px;top:237px" width="6" height="6" viewBox="0 0 6 6"><path d="M0 0H6.2L0 6.2Z" fill="#0a7d0a"/></svg>
<svg class="a" style="left:22px;top:257px" width="6" height="6" viewBox="0 0 6 6"><path d="M0 0H6.2L0 6.2Z" fill="#0a7d0a"/></svg>
<svg class="a" style="left:22px;top:277px" width="6" height="6" viewBox="0 0 6 6"><path d="M0 0H6.2L0 6.2Z" fill="#0a7d0a"/></svg>
<svg class="a" style="left:22px;top:297px" width="6" height="6" viewBox="0 0 6 6"><path d="M0 0H6.2L0 6.2Z" fill="#0a7d0a"/></svg>
<svg class="a" style="left:22px;top:317px" width="6" height="6" viewBox="0 0 6 6"><path d="M0 0H6.2L0 6.2Z" fill="#0a7d0a"/></svg>
<svg class="a" style="left:22px;top:337px" width="6" height="6" viewBox="0 0 6 6"><path d="M0 0H6.2L0 6.2Z" fill="#0a7d0a"/></svg>
<svg class="a" style="left:22px;top:357px" width="6" height="6" viewBox="0 0 6 6"><path d="M0 0H6.2L0 6.2Z" fill="#0a7d0a"/></svg>
<svg class="a" style="left:22px;top:377px" width="6" height="6" viewBox="0 0 6 6"><path d="M0 0H6.2L0 6.2Z" fill="#0a7d0a"/></svg>
<div class="a" style="left:258px;top:215px;width:334px;height:183px;background:transparent;border:2px solid #217346"></div>
<div class="a" style="left:587px;top:393px;width:7px;height:7px;background:#217346;border:1px solid #fff"></div>
<div class="a" style="left:618px;top:400px;width:214px;height:114px;background:#fff;border:1px solid #c3c3c3;box-shadow:1px 1px 3px rgba(0,0,0,.22)"></div>
<div class="a" style="left:630.52px;top:407.00px;font-size:11.7px;line-height:15px;letter-spacing:-0.225px;color:#444;font-weight:bold;">Quick Analysis (Ctrl+Q)</div>
<div class="a" style="left:630.30px;top:428.00px;font-size:11.7px;line-height:15px;letter-spacing:0.047px;color:#5a5a5a;">Use the Quick Analysis tool to</div>
<div class="a" style="left:629.91px;top:443.00px;font-size:11.7px;line-height:15px;letter-spacing:0.014px;color:#5a5a5a;">quickly and easily analyze your data</div>
<div class="a" style="left:630.22px;top:458.00px;font-size:11.7px;line-height:15px;letter-spacing:0.125px;color:#5a5a5a;">with some of Excel&#x27;s most useful</div>
<div class="a" style="left:630.12px;top:473.00px;font-size:11.7px;line-height:15px;letter-spacing:0.131px;color:#5a5a5a;">tools, such as charts, color-coding,</div>
<div class="a" style="left:629.90px;top:488.00px;font-size:11.7px;line-height:15px;letter-spacing:0.240px;color:#5a5a5a;">and formulas.</div>
<div class="a" style="left:594px;top:400px;width:24px;height:24px;background:#c8c8c8;border:1px solid #217346"></div>
<svg class="a" style="left:594px;top:400px" width="24" height="24" viewBox="0 0 24 24"><rect x="6" y="7" width="12" height="11" fill="#fff"/><rect x="10.6" y="5" width="8.4" height="2.2" fill="#747474"/><rect x="17.9" y="5" width="1.1" height="14" fill="#747474"/><rect x="5" y="17.9" width="14" height="1.1" fill="#747474"/><rect x="5" y="15.5" width="1.1" height="3.5" fill="#747474"/><rect x="10" y="9" width="4" height="1.8" fill="#d9472b"/><rect x="9" y="12" width="7.9" height="1.8" fill="#2f6fba"/><rect x="9" y="15.1" width="5.9" height="1.8" fill="#4da07a"/><path d="M6.6 4.2H10.6L8.7 8.3H9.9L4.5 15.2L6.3 10.2H4.1Z" fill="#eec67c"/></svg>
<div class="a" style="left:578px;top:386px;width:56px;height:51px;background:transparent;border:5px solid #ed1c24"></div>
</body></html>
